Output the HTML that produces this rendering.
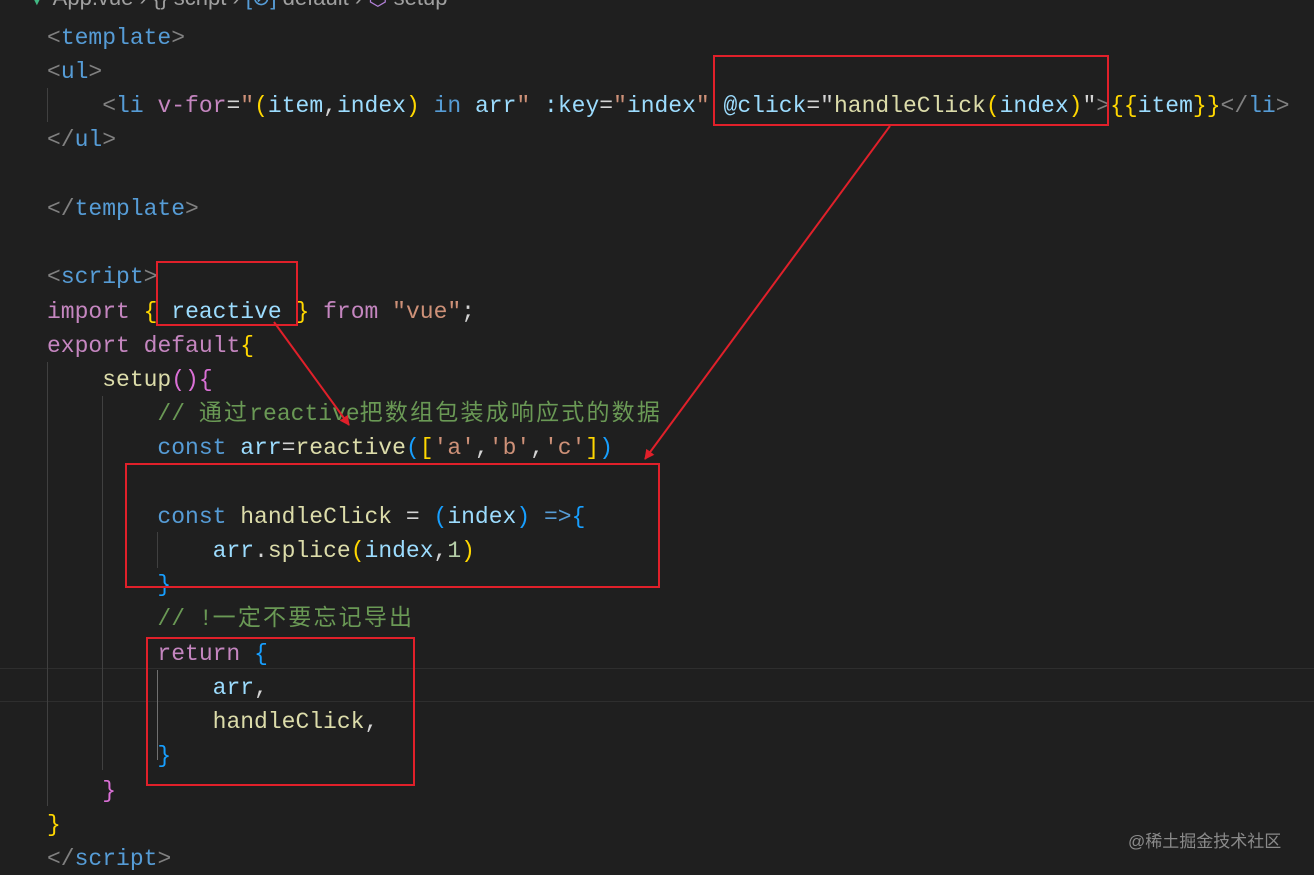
<!DOCTYPE html>
<html><head><meta charset="utf-8"><style>
html,body{margin:0;padding:0;background:#1f1f1f;width:1314px;height:875px;overflow:hidden;position:relative}
.l{position:absolute;left:47px;white-space:pre;font-family:"Liberation Mono","Noto Sans CJK SC",monospace;font-size:23px;line-height:34px;height:34px;color:#d4d4d4;margin-top:2px}
.g{color:#808080}.t{color:#569cd6}.a{color:#9cdcfe}.s{color:#ce9178}.k{color:#c586c0}.f{color:#dcdcaa}.c{color:#6a9955}.y{color:#ffd700}.p{color:#da70d6}.b{color:#179fff}.n{color:#b5cea8}
.cj{letter-spacing:2.2px}
.box{position:absolute;border:2px solid #e0202a;box-sizing:border-box}
.v{position:absolute;width:1px;background:#404040}
</style></head><body>
<div style="position:absolute;left:0;right:0;top:668px;height:1px;background:#2e2e2e"></div>
<div style="position:absolute;left:0;right:0;top:701px;height:1px;background:#2e2e2e"></div>
<div class="v" style="left:47px;top:88px;height:34px"></div>
<div class="v" style="left:47px;top:362px;height:444px"></div>
<div class="v" style="left:102px;top:396px;height:374px"></div>
<div class="v" style="left:157px;top:532px;height:36px"></div>
<div class="v" style="left:157px;top:670px;height:90px;background:#707070"></div>
<div class="l" style="left:26px;top:-21px;font-family:'Liberation Sans',sans-serif;font-size:22px;color:#a0a0a0"><span style="color:#41b883">▼</span> App.vue › {} script › <span class="t">[⊘]</span> default › <span style="color:#b180d7">⬡</span> setup</div>
<div class="l" style="top:19px"><span class="g">&lt;</span><span class="t">template</span><span class="g">&gt;</span></div>
<div class="l" style="top:53px"><span class="g">&lt;</span><span class="t">ul</span><span class="g">&gt;</span></div>
<div class="l" style="top:87px">    <span class="g">&lt;</span><span class="t">li</span> <span class="k">v-for</span>=<span class="s">"</span><span class="y">(</span><span class="a">item</span>,<span class="a">index</span><span class="y">)</span> <span class="t">in</span> <span class="a">arr</span><span class="s">"</span> <span class="a">:key</span>=<span class="s">"</span><span class="a">index</span><span class="s">"</span> <span class="a">@click</span>=<span>"</span><span class="f">handleClick</span><span class="y">(</span><span class="a">index</span><span class="y">)</span>"<span class="g">&gt;</span><span class="y">{{</span><span class="a">item</span><span class="y">}}</span><span class="g">&lt;/</span><span class="t">li</span><span class="g">&gt;</span></div>
<div class="l" style="top:121px"><span class="g">&lt;/</span><span class="t">ul</span><span class="g">&gt;</span></div>
<div class="l" style="top:190px"><span class="g">&lt;/</span><span class="t">template</span><span class="g">&gt;</span></div>
<div class="l" style="top:258px"><span class="g">&lt;</span><span class="t">script</span><span class="g">&gt;</span></div>
<div class="l" style="top:293px"><span class="k">import</span> <span class="y">{</span> <span class="a">reactive</span> <span class="y">}</span> <span class="k">from</span> <span class="s">"vue"</span>;</div>
<div class="l" style="top:327px"><span class="k">export</span> <span class="k">default</span><span class="y">{</span></div>
<div class="l" style="top:361px">    <span class="f">setup</span><span class="p">()</span><span class="p">{</span></div>
<div class="l" style="top:395px">        <span class="c">// <span class="cj">通过</span>reactive<span class="cj">把数组包装成响应式的数据</span></span></div>
<div class="l" style="top:429px">        <span class="t">const</span> <span class="a">arr</span>=<span class="f">reactive</span><span class="b">(</span><span class="y">[</span><span class="s">'a'</span>,<span class="s">'b'</span>,<span class="s">'c'</span><span class="y">]</span><span class="b">)</span></div>
<div class="l" style="top:498px">        <span class="t">const</span> <span class="f">handleClick</span> = <span class="b">(</span><span class="a">index</span><span class="b">)</span> <span class="t">=&gt;</span><span class="b">{</span></div>
<div class="l" style="top:532px">            <span class="a">arr</span>.<span class="f">splice</span><span class="y">(</span><span class="a">index</span>,<span class="n">1</span><span class="y">)</span></div>
<div class="l" style="top:566px">        <span class="b">}</span></div>
<div class="l" style="top:600px">        <span class="c">// !<span class="cj">一定不要忘记导出</span></span></div>
<div class="l" style="top:635px">        <span class="k">return</span> <span class="b">{</span></div>
<div class="l" style="top:669px">            <span class="a">arr</span>,</div>
<div class="l" style="top:703px">            <span class="f">handleClick</span>,</div>
<div class="l" style="top:737px">        <span class="b">}</span></div>
<div class="l" style="top:772px">    <span class="p">}</span></div>
<div class="l" style="top:806px"><span class="y">}</span></div>
<div class="l" style="top:840px"><span class="g">&lt;/</span><span class="t">script</span><span class="g">&gt;</span></div>
<div class="box" style="left:713px;top:55px;width:396px;height:71px"></div>
<div class="box" style="left:156px;top:261px;width:142px;height:65px"></div>
<div class="box" style="left:125px;top:463px;width:535px;height:125px"></div>
<div class="box" style="left:146px;top:637px;width:269px;height:149px"></div>
<svg style="position:absolute;left:0;top:0" width="1314" height="875">
<defs><marker id="ah" markerWidth="10" markerHeight="10" refX="9" refY="5" orient="auto" markerUnits="userSpaceOnUse"><path d="M0,0 L10,5 L0,10 z" fill="#e0202a"/></marker></defs>
<line x1="274" y1="322" x2="349" y2="425" stroke="#e0202a" stroke-width="2" marker-end="url(#ah)"/>
<line x1="890" y1="126" x2="645" y2="459" stroke="#e0202a" stroke-width="2" marker-end="url(#ah)"/>
</svg>
<div style="position:absolute;left:1128px;top:827px;font-family:'Liberation Sans','Noto Sans CJK SC',sans-serif;font-size:17px;color:#8a8a8a">@稀土掘金技术社区</div>
</body></html>
